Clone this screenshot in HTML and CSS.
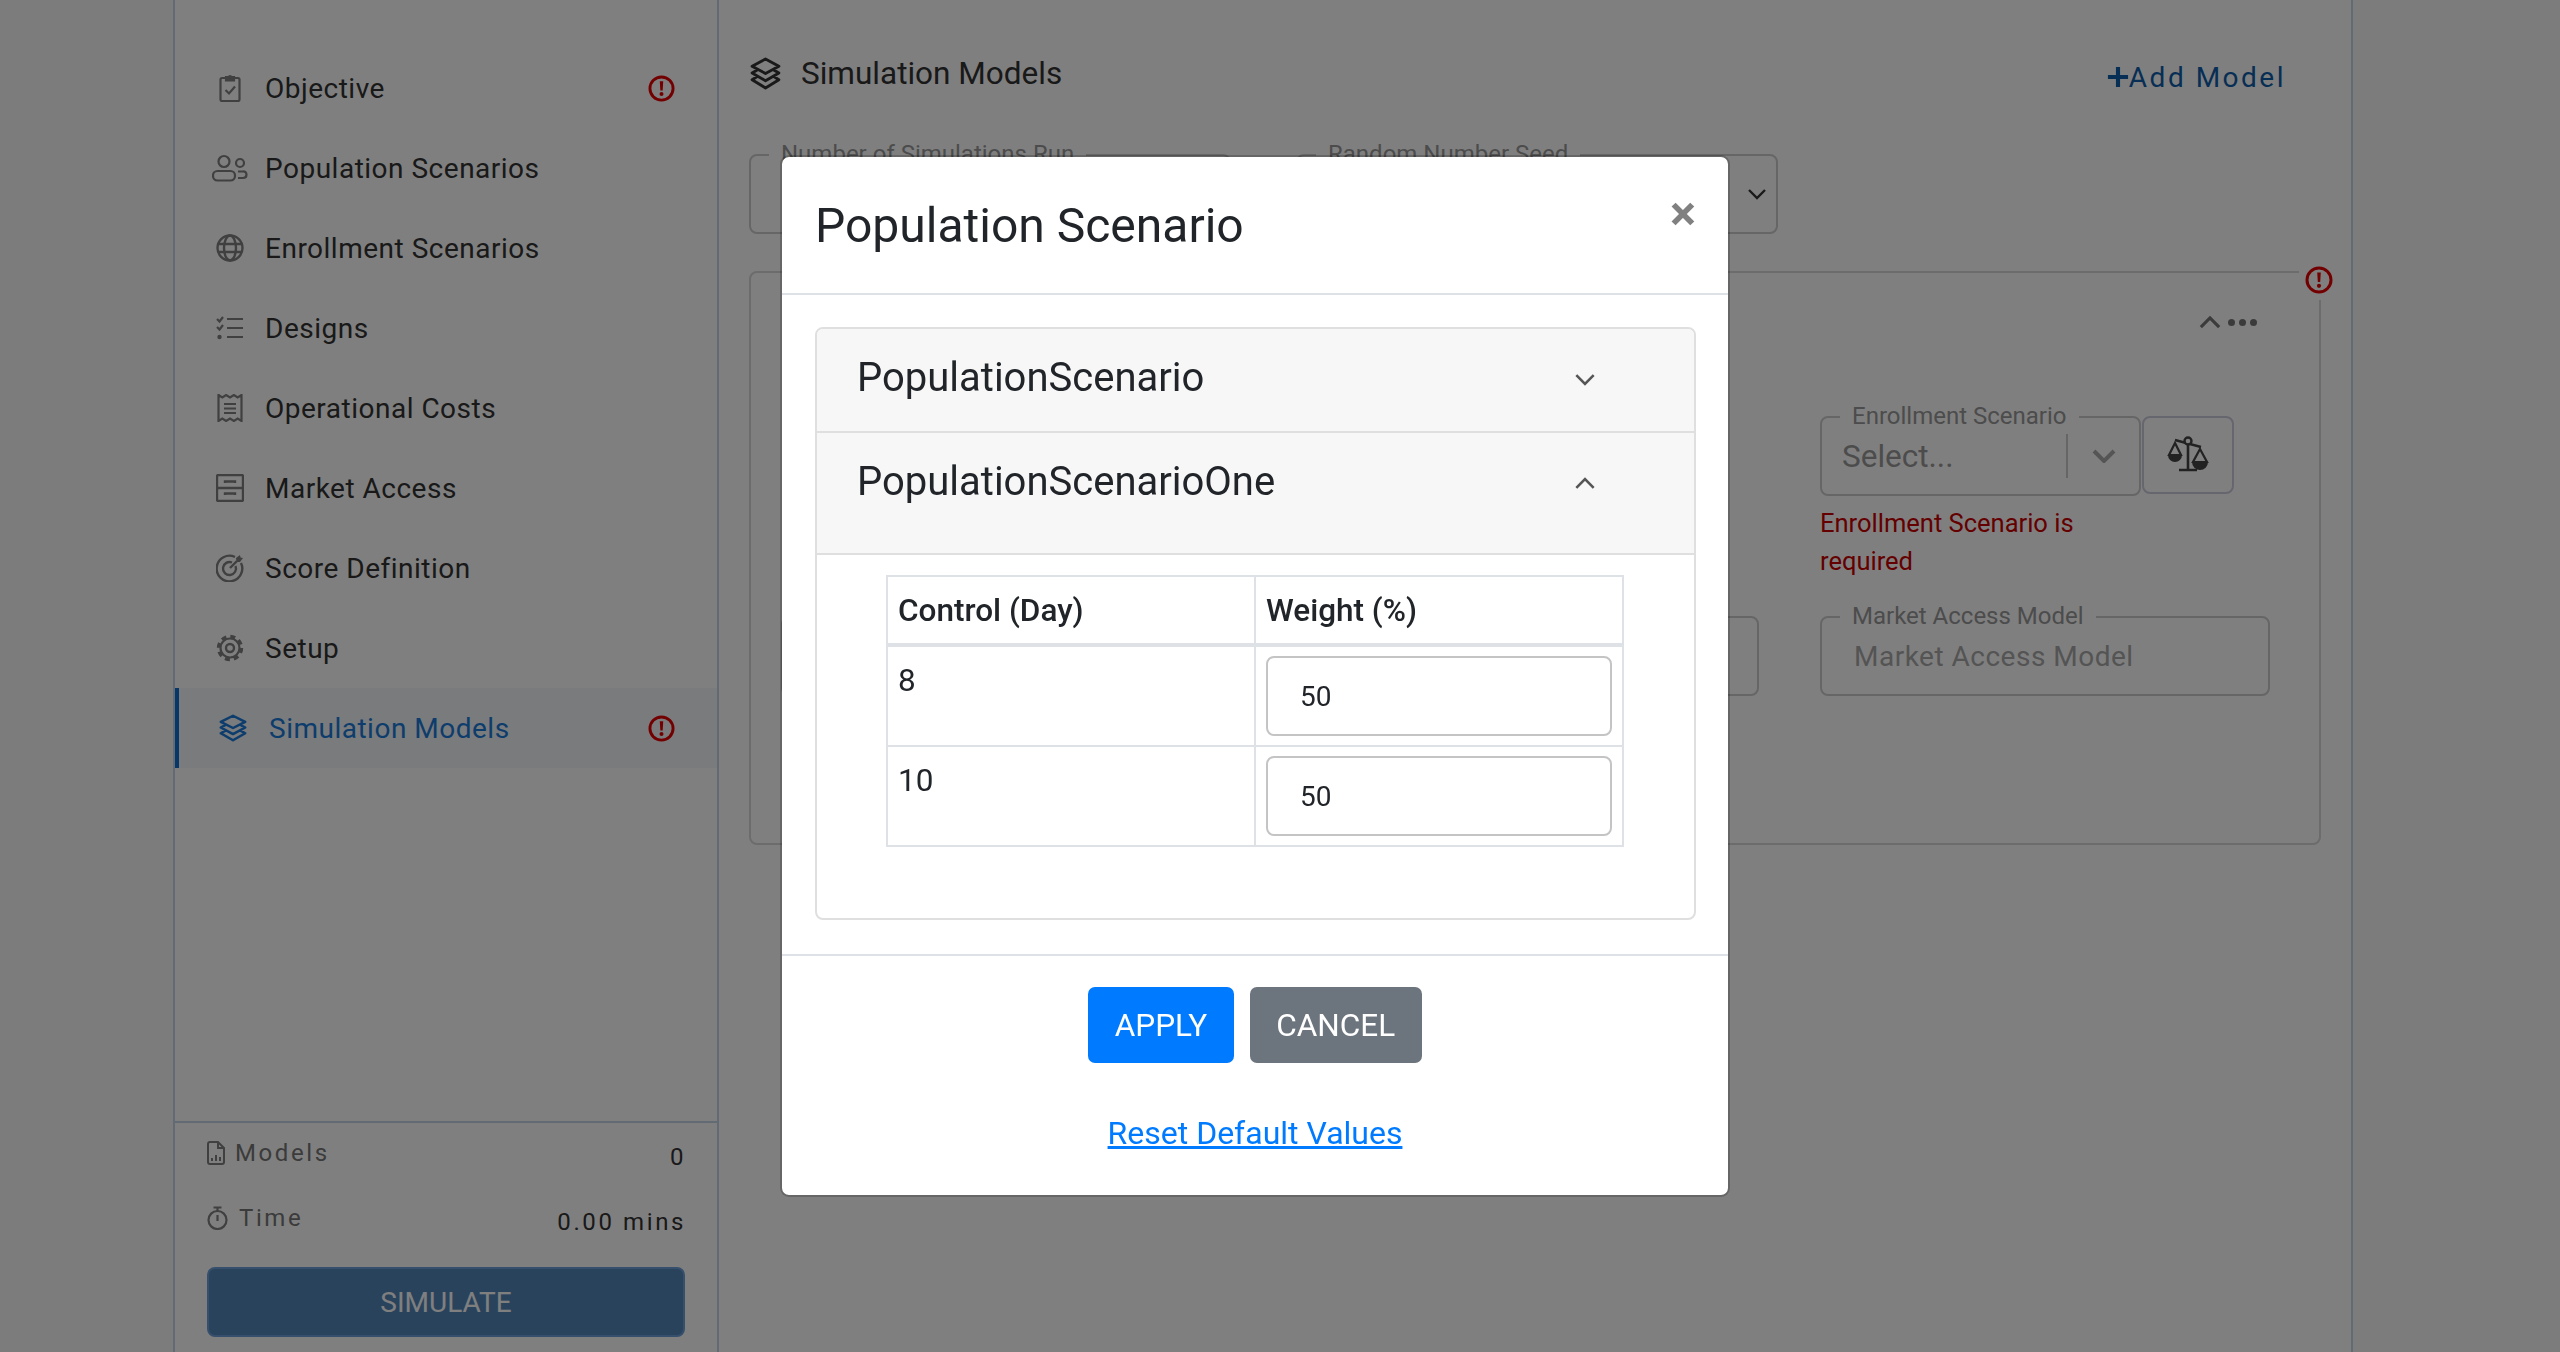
FILE: index.html
```html
<!DOCTYPE html>
<html lang="en">
<head>
    <meta charset="UTF-8">
    <title>Simulation Models</title>
    <link rel="stylesheet" href="styles.css">
</head>
<body>
    <svg class="sprites" width="0" height="0">
        <symbol id="i-error" viewBox="0 0 28 28">
            <circle cx="14" cy="14" r="12" fill="none" stroke="currentColor" stroke-width="3"/>
            <path d="M12.2 6.500h3.600l-.6 9.500h-2.400z" fill="currentColor"/>
            <circle cx="14" cy="19.800" r="2.100" fill="currentColor"/>
        </symbol>
        <symbol id="i-layers" viewBox="0 0 32 32" preserveAspectRatio="none">
            <path d="M16 2 29 9 16 16 3 9zM8 12.500 3 15.500 16 23 29 15.500 24 12.500M8 19 3 22 16 30 29 22 24 19" fill="none" stroke="currentColor" stroke-width="2.800" stroke-linejoin="round"/>
        </symbol>
        <symbol id="i-down" viewBox="0 0 20 12">
            <path d="M2 2 10 10 18 2" fill="none" stroke="currentColor" stroke-width="2.400"/>
        </symbol>
    </svg>

    <div class="shell">
        <aside class="sidebar">
            <nav class="side-nav">
                <a class="side-item">
                    <svg class="side-icon" viewBox="0 0 28 28" fill="none" stroke="currentColor" stroke-width="2.200"><rect x="4.500" y="4" width="19" height="23" rx="1.500"/><path d="M10 4.500V3h3a1 1 0 0 1 2 0h3v3.500h-8z" fill="currentColor"/><path d="M9.500 16l3.500 3.500 6-7"/></svg>
                    <span>Objective</span>
                    <svg class="error-icon"><use href="#i-error"/></svg>
                </a>
                <a class="side-item">
                    <svg class="side-icon people" viewBox="0 0 36 28" fill="none" stroke="currentColor" stroke-width="2.200"><circle cx="12" cy="7.500" r="5.500"/><circle cx="28" cy="9" r="4"/><rect x="1" y="17" width="22" height="9.500" rx="4.500"/><path d="M26 17.500h5a3 3 0 0 1 3.500 3c0 2-1.500 3.500-3.500 3.500h-5"/></svg>
                    <span>Population Scenarios</span>
                </a>
                <a class="side-item">
                    <svg class="side-icon" viewBox="0 0 28 28" fill="none" stroke="currentColor" stroke-width="2.400"><circle cx="14" cy="14" r="12.500"/><ellipse cx="14" cy="14" rx="6" ry="12.500"/><path d="M2 10h24M2 18h24"/></svg>
                    <span>Enrollment Scenarios</span>
                </a>
                <a class="side-item">
                    <svg class="side-icon" viewBox="0 0 28 28" fill="none" stroke="currentColor" stroke-width="2.200"><path d="M11 5h16M11 14h16M11 23h16"/><path d="M1 5l2.500 2.500L7 3M1 13l2.500 2.500L7 11"/><circle cx="3.500" cy="23" r="2.200" fill="currentColor" stroke="none"/></svg>
                    <span>Designs</span>
                </a>
                <a class="side-item">
                    <svg class="side-icon" viewBox="0 0 28 28" fill="none" stroke="currentColor" stroke-width="2.200"><path d="M2.500 1l3.800 2.500L10.100 1 14 3.500 17.900 1l3.800 2.500L25.500 1v26l-3.800-2.500L17.900 27 14 24.500 10.100 27l-3.800-2.500L2.500 27z"/><path d="M8 10h12M8 14.500h12M8 19h12"/></svg>
                    <span>Operational Costs</span>
                </a>
                <a class="side-item">
                    <svg class="side-icon" viewBox="0 0 28 28" fill="none" stroke="currentColor" stroke-width="2.400"><rect x="1" y="1" width="26" height="26" rx="1.500"/><path d="M1 14h26M9 9V7.500h10V9M9 21v-1.500h10V21"/></svg>
                    <span>Market Access</span>
                </a>
                <a class="side-item">
                    <svg class="side-icon" viewBox="0 0 28 28" fill="none" stroke="currentColor" stroke-width="2.400"><path d="M19 3a12.800 12.800 0 1 0 6 6"/><path d="M16 8.500a6.500 6.500 0 1 0 3.500 3.500"/><path d="M14 14 21 7"/><path d="M20 4l4-3 .5 2.500L27 4l-3 4h-3.500z" fill="currentColor" stroke="none"/></svg>
                    <span>Score Definition</span>
                </a>
                <a class="side-item">
                    <svg class="side-icon" viewBox="0 0 28 28" fill="none" stroke="currentColor"><circle cx="14" cy="14" r="11.500" stroke-width="3.400" stroke-dasharray="5 4.030"/><circle cx="14" cy="14" r="9.500" stroke-width="2.200"/><circle cx="14" cy="14" r="4" stroke-width="2.400"/></svg>
                    <span>Setup</span>
                </a>
                <a class="side-item active">
                    <svg class="side-icon"><use href="#i-layers"/></svg>
                    <span>Simulation Models</span>
                    <svg class="error-icon"><use href="#i-error"/></svg>
                </a>
            </nav>

            <div class="side-stats">
                <div class="stat-row">
                    <span class="stat-label">
                        <svg class="stat-icon" viewBox="0 0 18 24" fill="none" stroke="currentColor" stroke-width="2"><path d="M3 1h8l6 6v14a2 2 0 0 1-2 2H3a2 2 0 0 1-2-2V3a2 2 0 0 1 2-2zM11 1v6h6"/><path d="M5 20v-3M9 20v-6M13 20v-4"/></svg>
                        Models
                    </span>
                    <span class="stat-value">0</span>
                </div>
                <div class="stat-row">
                    <span class="stat-label">
                        <svg class="stat-icon stopwatch" viewBox="0 0 21 24" fill="none" stroke="currentColor" stroke-width="2.200"><circle cx="10.500" cy="14" r="9"/><path d="M6.500 1.500h8M10.500 2v3.500M10.500 9v6"/></svg>
                        Time
                    </span>
                    <span class="stat-value">0.00 mins</span>
                </div>
                <button class="simulate-btn">SIMULATE</button>
            </div>
        </aside>

        <main class="main">
            <div class="main-head">
                <h2 class="main-title"><svg class="title-icon"><use href="#i-layers"/></svg>Simulation Models</h2>
                <a class="add-model">
                    <svg class="plus-icon" viewBox="0 0 24 24"><path d="M12 1v22M1 12h22" stroke="currentColor" stroke-width="4.500" fill="none"/></svg>Add Model
                </a>
            </div>

            <div class="settings-row">
                <div class="field settings-field">
                    <label class="field-label">Number of Simulations Run</label>
                </div>
                <div class="field settings-field">
                    <label class="field-label">Random Number Seed</label>
                    <svg class="settings-chevron"><use href="#i-down"/></svg>
                </div>
            </div>

            <section class="model-card">
                <svg class="error-icon card-error"><use href="#i-error"/></svg>
                <div class="card-tools">
                    <svg class="tool-chevron" viewBox="0 0 24 14"><path d="M2 12 12 2 22 12" fill="none" stroke="currentColor" stroke-width="3.400"/></svg>
                    <span class="tool-dots"><i></i><i></i><i></i></span>
                </div>
                <div class="card-grid">
                    <div class="enroll-group">
                        <div class="enroll-line">
                            <div class="field enroll-select">
                                <label class="field-label">Enrollment Scenario</label>
                                <span class="select-text">Select...</span>
                                <span class="select-divider"></span>
                                <svg class="select-chevron" viewBox="0 0 24 14"><path d="M2 2 12 12 22 2" fill="none" stroke="currentColor" stroke-width="4"/></svg>
                            </div>
                            <button class="scale-btn">
                                <svg class="scale-icon" viewBox="0 0 42 40"><path d="M21 4v30M12 35h18M8 5l26 7" fill="none" stroke="currentColor" stroke-width="2.600"/><circle cx="21" cy="6" r="3.500" fill="#fff" stroke="currentColor" stroke-width="2.400"/><path d="M8 8 2 20h12zM33 14l-7 13h14z" fill="none" stroke="currentColor" stroke-width="2.200"/><path d="M1 20h14a7 7 0 0 1-14 0zM25 27h16a8 8 0 0 1-16 0z" fill="currentColor"/></svg>
                            </button>
                        </div>
                        <p class="field-error">Enrollment Scenario is required</p>
                    </div>
                    <div class="field left-field"></div>
                    <div class="field">
                        <label class="field-label">Market Access Model</label>
                        <span class="field-value">Market Access Model</span>
                    </div>
                </div>
            </section>
        </main>
    </div>

    <div class="backdrop"></div>

    <div class="modal">
        <div class="modal-head">
            <h3 class="modal-title">Population Scenario</h3>
            <span class="modal-close">&times;</span>
        </div>
        <div class="modal-body">
            <div class="accordion">
                <div class="acc-head">
                    <span>PopulationScenario</span>
                    <svg class="acc-chevron"><use href="#i-down"/></svg>
                </div>
                <div class="acc-head acc-open">
                    <span>PopulationScenarioOne</span>
                    <svg class="acc-chevron flip"><use href="#i-down"/></svg>
                </div>
                <div class="acc-panel">
                    <table class="weights">
                        <thead>
                            <tr><th>Control (Day)</th><th>Weight (%)</th></tr>
                        </thead>
                        <tbody>
                            <tr><td>8</td><td><input class="weight-input" type="text" value="50"></td></tr>
                            <tr><td>10</td><td><input class="weight-input" type="text" value="50"></td></tr>
                        </tbody>
                    </table>
                </div>
            </div>
        </div>
        <div class="modal-foot">
            <div class="foot-buttons">
                <button class="btn btn-primary">APPLY</button>
                <button class="btn btn-secondary">CANCEL</button>
            </div>
            <a class="reset-link" href="#">Reset Default Values</a>
        </div>
    </div>
</body>
</html>
```

FILE: styles.css
```css
* {
    margin: 0;
    padding: 0;
    box-sizing: border-box;
}

body {
    width: 2560px;
    height: 1352px;
    overflow: hidden;
    font-family: Roboto, sans-serif;
    background: #f8f9fb;
    color: #212529;
}

.sprites {
    position: absolute;
}

/* page behind the dialog */
.shell {
    display: flex;
    width: 2180px;
    height: 1352px;
    margin-left: 173px;
    background: #fff;
    border-left: 2px solid #c4d4e6;
    border-right: 2px solid #c4d4e6;
}

.sidebar {
    display: flex;
    flex-direction: column;
    width: 544px;
    border-right: 2px solid #c4d4e6;
}

.side-nav {
    flex: 1;
    padding-top: 48px;
}

.side-item {
    display: flex;
    align-items: center;
    height: 80px;
    padding-left: 41px;
    padding-right: 42px;
    gap: 21px;
    font-size: 28px;
    letter-spacing: 0.500px;
    color: #333;
}

.side-icon {
    width: 28px;
    height: 28px;
    flex-shrink: 0;
    color: #808080;
}

.side-icon.people {
    width: 36px;
    margin: 0 -4px;
}

.side-item.active {
    padding-left: 40px;
    gap: 22px;
    border-left: 4px solid #0f6fd0;
    background: #f5f6fa;
    color: #1a7ad8;
}

.side-item.active .side-icon {
    width: 30px;
    margin: 0 -1px;
    color: #1a7ad8;
}

.error-icon {
    width: 27px;
    height: 27px;
    margin-left: auto;
    color: #e60000;
}

.side-stats {
    height: 231px;
    padding: 14px 31px 0 32px;
    border-top: 2px solid #c4d4e6;
}

.stat-row {
    display: flex;
    justify-content: space-between;
    height: 65px;
    letter-spacing: 2.600px;
    font-size: 24px;
}

.stat-row:nth-child(2) {
    height: 52px;
}

.stat-label {
    display: flex;
    align-items: center;
    gap: 10px;
    height: 32px;
    color: #777;
}

.stat-icon {
    width: 18px;
    height: 24px;
    color: #808080;
}

.stat-icon.stopwatch {
    width: 21px;
    margin-right: 1px;
}

.stat-value {
    margin-top: 4px;
    line-height: 32px;
    color: #333;
}

.simulate-btn {
    display: block;
    width: 478px;
    height: 70px;
    margin-top: 13px;
    font-family: inherit;
    font-size: 28px;
    color: #fff;
    background: #5386bb;
    border: 2px solid #6a9fd8;
    border-radius: 8px;
}

.main {
    flex: 1;
    padding: 0 30px;
}

.main-head {
    display: flex;
    justify-content: space-between;
    align-items: flex-start;
    height: 154px;
    padding: 50px 35px 0 0;
}

.main-title {
    display: flex;
    align-items: center;
    gap: 19px;
    height: 46px;
    font-size: 31.500px;
    font-weight: 400;
    color: #333;
}

.title-icon {
    width: 33px;
    height: 33px;
    color: #333;
}

.add-model {
    display: flex;
    align-items: center;
    height: 46px;
    margin-top: 4px;
    font-size: 28px;
    letter-spacing: 2.500px;
    color: #0f5ca8;
}

.plus-icon {
    width: 22px;
    height: 22px;
}

.settings-row {
    display: flex;
    gap: 65px;
    margin-bottom: 37px;
}

.field {
    position: relative;
    height: 80px;
    border: 2px solid #ccc;
    border-radius: 8px;
}

.settings-field {
    width: 482px;
}

.field-label {
    position: absolute;
    left: 18px;
    top: -16px;
    padding: 0 12px;
    font-size: 24px;
    line-height: 28px;
    color: #999;
    background: #fff;
}

.settings-chevron {
    position: absolute;
    right: 9px;
    top: 32px;
    width: 20px;
    height: 12px;
    color: #333;
}

.model-card {
    position: relative;
    width: 1572px;
    height: 574px;
    border: 2px solid #d8d8d8;
    border-radius: 8px;
}

/* sits on the corner of the card and hides the border under it */
.card-error {
    position: absolute;
    right: -20px;
    top: -13px;
    width: 40px;
    height: 40px;
    padding: 6px;
    background: #fff;
}

.card-tools {
    display: flex;
    justify-content: flex-end;
    align-items: center;
    gap: 7px;
    height: 98px;
    padding-right: 62px;
    margin-bottom: 45px;
}

.tool-chevron {
    width: 22px;
    height: 13px;
    color: #777;
}

.tool-dots {
    display: flex;
    gap: 4px;
}

.tool-dots i {
    display: block;
    width: 7px;
    height: 7px;
    border-radius: 50%;
    background: #777;
}

.card-grid {
    display: grid;
    grid-template-columns: 1fr 450px;
    column-gap: 61px;
    row-gap: 36px;
    padding: 0 49px 0 30px;
}

.enroll-group {
    grid-column: 2;
}

.enroll-line {
    display: flex;
    align-items: flex-start;
    gap: 1px;
}

.enroll-select {
    display: flex;
    align-items: center;
    width: 321px;
    padding-left: 20px;
    font-size: 31.500px;
    color: #999;
}

.select-text {
    width: 224px;
}

.select-divider {
    width: 2px;
    height: 44px;
    background: #ccc;
}

.select-chevron {
    width: 24px;
    height: 14px;
    margin-left: 24px;
    color: #aaa;
}

.scale-btn {
    display: flex;
    align-items: center;
    justify-content: center;
    width: 92px;
    height: 78px;
    background: #fff;
    border: 2px solid #ccd;
    border-radius: 8px;
}

.scale-icon {
    width: 42px;
    height: 40px;
    color: #444;
}

.field-error {
    margin-top: 8px;
    width: 321px;
    font-size: 25.500px;
    line-height: 38px;
    color: #c80000;
}

.left-field {
    grid-column: 1;
}

.field-value {
    display: block;
    padding-left: 32px;
    font-size: 28px;
    letter-spacing: 0.500px;
    line-height: 78px;
    color: #a9a9a9;
}

/* dialog */
.backdrop {
    position: fixed;
    inset: 0;
    background: rgba(0, 0, 0, 0.5);
}

.modal {
    position: fixed;
    left: 780px;
    top: 155px;
    width: 950px;
    height: 1042px;
    background: #fff;
    border: 2px solid rgba(0, 0, 0, 0.2);
    background-clip: padding-box;
    border-radius: 9px;
}

.modal-head {
    display: flex;
    justify-content: space-between;
    align-items: flex-start;
    height: 138px;
    padding: 35px 32px 0 33px;
    border-bottom: 2px solid #dee2e6;
}

.modal-title {
    font-size: 48px;
    font-weight: 400;
    line-height: 68px;
}

.modal-close {
    margin-top: 2px;
    font-size: 49px;
    font-weight: 700;
    line-height: 40px;
    color: #808080;
}

.modal-body {
    padding: 32px 32px 34px 33px;
}

.accordion {
    height: 593px;
    border: 2px solid #dfdfdf;
    border-radius: 8px;
    overflow: hidden;
}

.acc-head {
    display: flex;
    justify-content: space-between;
    height: 104px;
    padding: 21px 98px 0 40px;
    font-size: 40px;
    line-height: 56px;
    background: #f7f7f7;
    border-bottom: 2px solid #dfdfdf;
}

.acc-open {
    height: 122px;
}

.acc-chevron {
    width: 22px;
    height: 13px;
    margin-top: 23px;
    color: #555;
}

.acc-chevron.flip {
    transform: scaleY(-1);
}

.acc-panel {
    padding: 20px 70px 0 69px;
}

.weights {
    width: 738px;
    border-collapse: collapse;
    table-layout: fixed;
    font-size: 31.500px;
}

.weights th,
.weights td {
    border: 2px solid #dee2e6;
    padding: 9px 10px;
    text-align: left;
    vertical-align: top;
}

.weights th {
    height: 68px;
    padding: 10px 10px 8px;
    font-weight: 500;
    line-height: 48px;
    border-bottom-width: 4px;
}

.weights td {
    line-height: 48px;
}

.weights td:first-child {
    padding-top: 10px;
}

.weight-input {
    display: block;
    width: 346px;
    height: 80px;
    padding-left: 32px;
    font-family: inherit;
    font-size: 28px;
    color: #212529;
    background: #fff;
    border: 2px solid #c4c4c4;
    border-radius: 8px;
}

.modal-foot {
    padding-top: 31px;
    text-align: center;
    border-top: 2px solid #dee2e6;
}

.foot-buttons {
    display: flex;
    justify-content: center;
    gap: 16px;
}

.btn {
    height: 76px;
    padding: 0 26.500px;
    font-family: inherit;
    font-size: 31.500px;
    color: #fff;
    border: 0;
    border-radius: 7px;
}

.btn-primary {
    background: #007bff;
}

.btn-secondary {
    background: #6c757d;
}

.reset-link {
    display: inline-block;
    margin-top: 46px;
    font-size: 32px;
    line-height: 48px;
    color: #007bff;
}
```
